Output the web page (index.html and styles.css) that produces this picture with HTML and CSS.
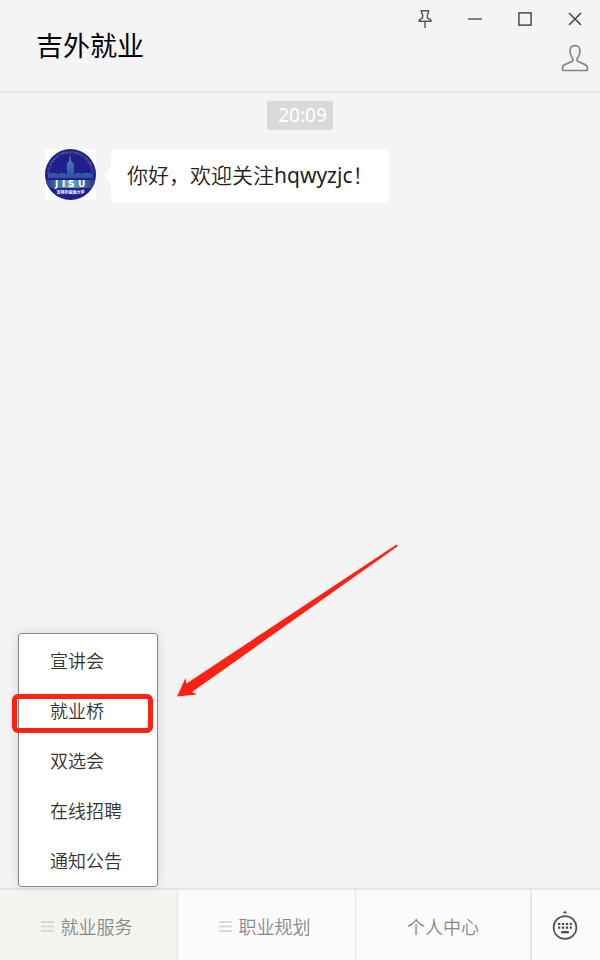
FILE: index.html
```html
<!DOCTYPE html>
<html lang="zh-CN">
<head>
<meta charset="utf-8">
<meta name="viewport" content="width=device-width, initial-scale=1">
<title>吉外就业</title>
<link rel="stylesheet" href="styles.css">
</head>
<body>
<div class="window">
  <header class="header">
    <h1 class="title">吉外就业</h1>
    <div class="tools">
      <div class="controls">
        <button class="control" type="button" aria-label="置顶">
          <svg width="16" height="20" viewBox="0 0 16 20" fill="none" stroke="#555" stroke-width="1.4"><path d="M3.6 1.7h8.8M4.6 2v2.200l1 1v3.600l-3.500 2.400v1h11.800v-1l-3.500-2.400V5.200l1-1V2M8 12.200V19"/></svg>
        </button>
        <button class="control" type="button" aria-label="最小化">
          <svg width="14" height="14" viewBox="0 0 14 14" fill="none" stroke="#666" stroke-width="1.6"><path d="M0 7h14"/></svg>
        </button>
        <button class="control" type="button" aria-label="最大化">
          <svg width="14" height="14" viewBox="0 0 14 14" fill="none" stroke="#555" stroke-width="1.6"><rect x=".9" y=".9" width="12.200" height="12.200"/></svg>
        </button>
        <button class="control" type="button" aria-label="关闭">
          <svg width="14" height="14" viewBox="0 0 14 14" fill="none" stroke="#4a4a4a" stroke-width="1.6"><path d="M1 1l12 12M13 1L1 13"/></svg>
        </button>
      </div>
      <button class="profile" type="button" aria-label="公众号资料">
        <svg width="28" height="28" viewBox="0 0 28 28" fill="none" stroke="#858585" stroke-width="1.7" stroke-linejoin="round"><path d="M14 1.700c-3.400 0-5 2.300-5 5.300 0 3.200 1 5.500 2.600 7.300.9 1.100.7 2.600-.8 3.200l-7 3.100C2 21.400 1.500 22.400 1.500 24v1.400c0 .7.400 1.100 1.100 1.100h22.800c.7 0 1.100-.4 1.100-1.100V24c0-1.600-.5-2.600-2.300-3.400l-7-3.100c-1.500-.6-1.700-2.100-.8-3.200C18 12.500 19 10.200 19 7c0-3-1.600-5.300-5-5.300z"/></svg>
      </button>
    </div>
  </header>

  <main class="chat">
    <time class="stamp">20:09</time>
    <div class="message">
      <svg class="avatar" width="51" height="51" viewBox="0 0 51 51" role="img" aria-label="JISU 吉林外国语大学">
        <defs>
          <linearGradient id="tower" x1="0" y1="0" x2="0" y2="1"><stop offset="0" stop-color="#5f9fd6"/><stop offset="1" stop-color="#2f5cab"/></linearGradient>
          <linearGradient id="band"><stop offset="0" stop-color="#23308f"/><stop offset=".5" stop-color="#6caeb0"/><stop offset="1" stop-color="#23308f"/></linearGradient>
          <clipPath id="disc"><circle cx="25.500" cy="25.500" r="25.500"/></clipPath>
          <path id="rim" d="M4.200 25.500a21.300 21.300 0 0 1 42.600 0"/>
        </defs>
        <rect width="51" height="51" fill="#fff"/>
        <g clip-path="url(#disc)">
          <rect width="51" height="51" fill="#20208a"/>
          <path d="M3 29v-4l4-1h5v1h3v-1h5v1h2V14l2-2 1-7 1 7 3 3v10h2v-1h4v1l4-1h6l3 1v4z" fill="url(#tower)" opacity=".8"/>
          <rect y="31" width="51" height="8" fill="url(#band)"/>
        </g>
        <text class="rim-text"><textPath href="#rim">JILIN INTERNATIONAL STUDIES UNIVERSITY</textPath></text>
        <text class="logo-text" y="38"><tspan x="10">J</tspan><tspan x="17">I</tspan><tspan x="23">S</tspan><tspan x="33">U</tspan></text>
        <text class="school-text" x="25.500" y="45" text-anchor="middle">吉林外国语大学</text>
      </svg>
      <p class="bubble">你好，欢迎关注<span class="account">hqwyzjc</span>！</p>
    </div>
    <svg class="arrow" width="222" height="153" viewBox="0 0 222 153" aria-hidden="true"><path d="M0 152.500L8.500 134l1 5.500L219.500.500l1.500 1.500L15 148l5 2.500z" fill="#ff2214"/></svg>
  </main>

  <footer class="tabs">
    <div class="tab-slot">
      <button class="tab tab-open" type="button" aria-expanded="true">
        <svg width="13" height="11" viewBox="0 0 13 11" stroke="#cfcfcf" stroke-width="1.700"><path d="M0 1h13M0 5.500h13M0 10h13"/></svg>
        就业服务
      </button>
      <ul class="menu">
        <li><a class="item" href="#">宣讲会</a></li>
        <li><a class="item item-marked" href="#">就业桥</a></li>
        <li><a class="item" href="#">双选会</a></li>
        <li><a class="item" href="#">在线招聘</a></li>
        <li><a class="item" href="#">通知公告</a></li>
      </ul>
    </div>
    <div class="tab-slot">
      <button class="tab" type="button">
        <svg width="13" height="11" viewBox="0 0 13 11" stroke="#cfcfcf" stroke-width="1.700"><path d="M0 1h13M0 5.500h13M0 10h13"/></svg>
        职业规划
      </button>
    </div>
    <div class="tab-slot">
      <button class="tab" type="button">个人中心</button>
    </div>
    <button class="keyboard" type="button" aria-label="切换到键盘">
      <svg width="26" height="30" viewBox="0 0 26 30"><path d="M10.500 3.200L13 .8l2.500 2.400z" fill="#555"/><circle cx="13" cy="17.500" r="11.400" fill="none" stroke="#555" stroke-width="1.700"/><path d="M6.100 14h13.800M6.100 17.600h13.800" stroke="#444" stroke-width="2.200" stroke-dasharray="2.200 1.660"/><path d="M9.200 22.200h7.600" stroke="#444" stroke-width="2.200"/></svg>
    </button>
  </footer>
</div>
</body>
</html>
```
FILE: styles.css
```css
*,
*::before,
*::after {
  box-sizing: border-box;
}

body {
  margin: 0;
  font-family: "Noto Sans", "Noto Sans CJK SC", sans-serif;
  font-weight: 350;
  background: #f4f4f4;
}

button {
  padding: 0;
  border: 0;
  background: none;
  font: inherit;
}

svg {
  display: block;
}

.window {
  display: flex;
  flex-direction: column;
  min-height: 100vh;
}

.header {
  display: flex;
  justify-content: space-between;
  border-bottom: 2px solid #e6e6e6;
}

.title {
  margin: 0;
  padding: 26px 0 25px 36px;
  font-size: 27px;
  font-weight: 400;
  line-height: 40px;
  color: #000;
}

.tools {
  display: flex;
  flex-direction: column;
  align-items: flex-end;
}

.controls {
  display: flex;
}

.control {
  display: grid;
  place-items: center;
  width: 50px;
  height: 38px;
}

.profile {
  margin: 6px 11px 0 0;
}

.chat {
  position: relative;
  flex: 1;
  display: flex;
  flex-direction: column;
  padding: 8px 45px;
}

.stamp {
  align-self: center;
  padding: 0 6px 0 11px;
  border-radius: 2px;
  background: #dadada;
  color: #fff;
  font-size: 19px;
  font-weight: 400;
  line-height: 29px;
}

.message {
  display: flex;
  align-items: flex-start;
  gap: 15px;
  margin-top: 19px;
}

.avatar {
  flex: none;
}

.rim-text {
  font: 3px "Liberation Sans", sans-serif;
  fill: #8c9bd0;
}

.logo-text {
  font: bold 9px "DejaVu Sans", sans-serif;
  fill: #fff;
}

.school-text {
  font: bold 4px "Noto Sans CJK SC", sans-serif;
  fill: #fff;
}

.bubble {
  position: relative;
  margin: 0;
  padding: 10px 16px 12px;
  border-radius: 6px;
  background: #fff;
  color: #222;
  font-size: 21px;
  line-height: 32px;
}

.bubble::before {
  content: "";
  position: absolute;
  top: 18px;
  left: -8px;
  border: 8px solid transparent;
  border-left: 0;
  border-right-color: #fff;
}

.account {
  font-weight: 400;
}

.arrow {
  position: absolute;
  left: 177px;
  bottom: 191px;
}

.tabs {
  display: grid;
  grid-template-columns: 178fr 178fr 174fr 70px;
  height: 72px;
  border-top: 2px solid #e6e6e6;
  background: #fbfbfb;
}

.tab-slot {
  position: relative;
  display: flex;
  border-right: 1px solid #e6e6e6;
}

.tab-slot:nth-child(3) {
  border-right: 0;
}

.tab {
  flex: 1;
  display: flex;
  align-items: center;
  justify-content: center;
  gap: 7px;
  padding: 3px 4px 0 0;
  color: #888;
  font-size: 18px;
  line-height: 26px;
}

.tab-slot:nth-child(3) .tab {
  padding-right: 0;
}

.tab-open {
  background: #f4f5f0;
}

.keyboard {
  display: grid;
  place-items: center;
  padding-right: 2px;
  border-left: 2px solid #e6e6e6;
}

.menu {
  position: absolute;
  left: 18px;
  bottom: 73px;
  width: 140px;
  margin: 0;
  padding: 2px 0 0;
  list-style: none;
  border: 1px solid #888;
  border-radius: 3px;
  background: #fff;
  box-shadow: 0 0 12px rgba(0, 0, 0, 0.12);
}

.item {
  position: relative;
  display: block;
  padding-left: 31px;
  color: #333;
  font-size: 18px;
  line-height: 50px;
  text-decoration: none;
}

.item-marked::after {
  content: "";
  position: absolute;
  top: 8px;
  left: -7px;
  width: 141px;
  height: 39px;
  border: 5px solid #ff2214;
  border-radius: 6px;
}
```
